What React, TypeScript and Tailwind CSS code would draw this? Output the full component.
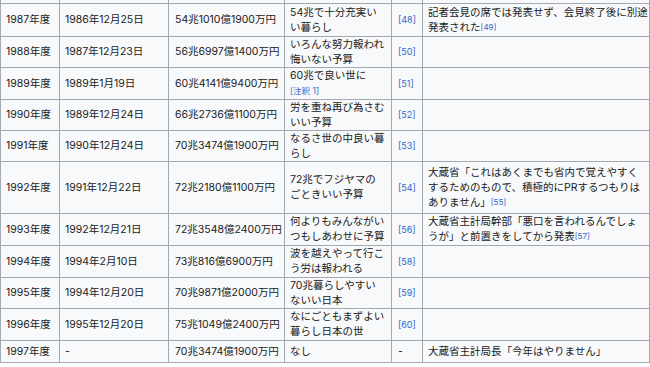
import type { ReactNode } from 'react';

type Row = {
  fy: string;
  date: string;
  amount: string;
  name: ReactNode;
  cite: string;
  note?: ReactNode;
  h: string;
};

function Sup({ children }: { children: ReactNode }) {
  return <sup className="text-[8px] leading-none text-[#3366cc] relative -top-[1px]">{children}</sup>;
}

const rows: Row[] = [
  {
    fy: '1987年度',
    date: '1986年12月25日',
    amount: '54兆1010億1900万円',
    name: <>54兆で十分充実い<br />い暮らし</>,
    cite: '[48]',
    note: <>記者会見の席では発表せず、会見終了後に別途<br />発表された<Sup>[49]</Sup></>,
    h: 'h-[33px]',
  },
  {
    fy: '1988年度',
    date: '1987年12月23日',
    amount: '56兆6997億1400万円',
    name: <>いろんな努力報われ<br />悔いない予算</>,
    cite: '[50]',
    h: 'h-[31px]',
  },
  {
    fy: '1989年度',
    date: '1989年1月19日',
    amount: '60兆4141億9400万円',
    name: <>60兆で良い世に<br /><span className="text-[8.5px] text-[#3366cc]">[注釈 1]</span></>,
    cite: '[51]',
    h: 'h-[31px]',
  },
  {
    fy: '1990年度',
    date: '1989年12月24日',
    amount: '66兆2736億1100万円',
    name: <>労を重ね再び為さむ<br />いい予算</>,
    cite: '[52]',
    h: 'h-[31px]',
  },
  {
    fy: '1991年度',
    date: '1990年12月24日',
    amount: '70兆3474億1900万円',
    name: <>なるさ世の中良い暮<br />らし</>,
    cite: '[53]',
    h: 'h-[31px]',
  },
  {
    fy: '1992年度',
    date: '1991年12月22日',
    amount: '72兆2180億1100万円',
    name: <>72兆でフジヤマの<br />ごときいい予算</>,
    cite: '[54]',
    note: (
      <>
        大蔵省「これはあくまでも省内で覚えやすく<br />
        するためのもので、積極的にPRするつもりは<br />
        ありません」<Sup>[55]</Sup>
      </>
    ),
    h: 'h-[52px]',
  },
  {
    fy: '1993年度',
    date: '1992年12月21日',
    amount: '72兆3548億2400万円',
    name: <>何よりもみんながい<br />つもしあわせに予算</>,
    cite: '[56]',
    note: <>大蔵省主計局幹部「悪口を言われるんでしょ<br />うが」と前置きをしてから発表<Sup>[57]</Sup></>,
    h: 'h-[32px]',
  },
  {
    fy: '1994年度',
    date: '1994年2月10日',
    amount: '73兆816億6900万円',
    name: <>波を越えやって行こ<br />う労は報われる</>,
    cite: '[58]',
    h: 'h-[32px]',
  },
  {
    fy: '1995年度',
    date: '1994年12月20日',
    amount: '70兆9871億2000万円',
    name: <>70兆暮らしやすい<br />ないい日本</>,
    cite: '[59]',
    h: 'h-[31px]',
  },
  {
    fy: '1996年度',
    date: '1995年12月20日',
    amount: '75兆1049億2400万円',
    name: <>なにごともまずよい<br />暮らし日本の世</>,
    cite: '[60]',
    h: 'h-[32px]',
  },
  {
    fy: '1997年度',
    date: '-',
    amount: '70兆3474億1900万円',
    name: 'なし',
    cite: '-',
    note: '大蔵省主計局長「今年はやりません」',
    h: 'h-[22px]',
  },
];

const cell = 'border border-[#a2a9b1] px-[5px] py-0 whitespace-nowrap';

export default function App() {
  return (
    <main className="bg-white min-h-screen w-[650px] h-[367px] overflow-hidden font-['Inter','Noto_Sans_CJK_JP',sans-serif] text-[10.5px] leading-[15px] text-[#202122]">
      <table className="table-fixed border-collapse bg-[#f8f9fa] w-[649px]">
        <colgroup>
          <col className="w-[59px]" />
          <col className="w-[109px]" />
          <col className="w-[116px]" />
          <col className="w-[107px]" />
          <col className="w-[31px]" />
          <col className="w-[227px]" />
        </colgroup>
        <tbody>
          <tr className="h-[3px]">
            {[0, 1, 2, 3, 4, 5].map(i => (
              <td key={i} className="border-x border-[#a2a9b1] p-0" />
            ))}
          </tr>
          {rows.map(r => (
            <tr key={r.fy} className={r.h}>
              <td className={cell}>{r.fy}</td>
              <td className={cell}>{r.date}</td>
              <td className={cell + ' pl-[6px]'}>{r.amount}</td>
              <td className={cell}>{r.name}</td>
              <td className={cell + ' pl-[6px]'}>
                {r.cite === '-' ? r.cite : <span className="text-[9px] text-[#3366cc]">{r.cite}</span>}
              </td>
              <td className={cell}>{r.note}</td>
            </tr>
          ))}
        </tbody>
      </table>
    </main>
  );
}
